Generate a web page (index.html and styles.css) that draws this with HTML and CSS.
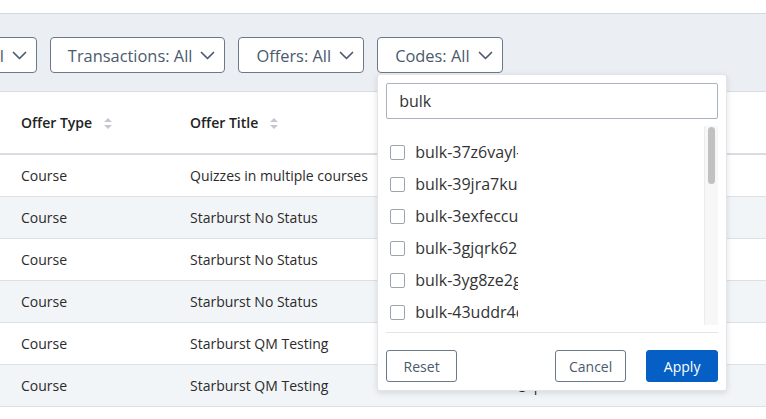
FILE: index.html
```html
<!DOCTYPE html>
<html lang="en">
<head>
  <meta charset="UTF-8">
  <title>Transactions</title>
  <link rel="stylesheet" href="styles.css">
</head>
<body>

  <div class="top-strip"></div>

  <div class="filtros">
    <div class="filtro">Status: All <svg class="chev" viewBox="0 0 15 9"><polyline points="1.5,1.5 7.5,7.5 13.5,1.5"/></svg></div>
    <div class="filtro">Transactions: All <svg class="chev" viewBox="0 0 15 9"><polyline points="1.5,1.5 7.5,7.5 13.5,1.5"/></svg></div>
    <div class="filtro">Offers: All <svg class="chev" viewBox="0 0 15 9"><polyline points="1.5,1.5 7.5,7.5 13.5,1.5"/></svg></div>
    <div class="filtro-wrap">
      <div class="filtro">Codes: All <svg class="chev" viewBox="0 0 15 9"><polyline points="1.5,1.5 7.5,7.5 13.5,1.5"/></svg></div>

      <div class="popover">
        <input class="buscar" type="text" value="bulk">
        <div class="lista">
          <div class="items">
            <label class="opcion"><span class="check"></span><span class="codigo">bulk-37z6vayl-k2m9</span></label>
            <label class="opcion"><span class="check"></span><span class="codigo">bulk-39jra7ku-p4x1</span></label>
            <label class="opcion"><span class="check"></span><span class="codigo">bulk-3exfeccu-a8d2</span></label>
            <label class="opcion"><span class="check"></span><span class="codigo">bulk-3gjqrk62-z7q3</span></label>
            <label class="opcion"><span class="check"></span><span class="codigo">bulk-3yg8ze2g-m1c5</span></label>
            <label class="opcion"><span class="check"></span><span class="codigo">bulk-43uddr4c-t9w6</span></label>
            <label class="opcion"><span class="check"></span><span class="codigo">bulk-4b7hnq2z-r3e8</span></label>
            <label class="opcion"><span class="check"></span><span class="codigo">bulk-4kd92mfa-u5y0</span></label>
          </div>
          <div class="barra"><div class="thumb"></div></div>
        </div>
        <div class="acciones">
          <button class="btn">Reset</button>
          <div class="derecha">
            <button class="btn">Cancel</button>
            <button class="btn btn-azul">Apply</button>
          </div>
        </div>
      </div>
    </div>
  </div>

  <table class="tabla">
    <thead>
      <tr>
        <th class="c1">Offer Type <span class="orden"></span></th>
        <th class="c2">Offer Title <span class="orden"></span></th>
        <th>Participant</th>
      </tr>
    </thead>
    <tbody>
      <tr><td class="c1">Course</td><td class="c2">Quizzes in multiple courses</td><td>anna@questionmark.com</td></tr>
      <tr><td class="c1">Course</td><td class="c2">Starburst No Status</td><td>mark@questionmark.com</td></tr>
      <tr><td class="c1">Course</td><td class="c2">Starburst No Status</td><td>mark@questionmark.com</td></tr>
      <tr><td class="c1">Course</td><td class="c2">Starburst No Status</td><td>mark@questionmark.com</td></tr>
      <tr><td class="c1">Course</td><td class="c2">Starburst QM Testing</td><td>christian@questionmark.com</td></tr>
      <tr><td class="c1">Course</td><td class="c2">Starburst QM Testing</td><td>christian@questionmark.com</td></tr>
    </tbody>
  </table>

</body>
</html>
```

FILE: styles.css
```css
* { box-sizing: border-box; }

body {
  margin: 0;
  font-family: 'Open Sans', 'Noto Sans', sans-serif;
  background: #fff;
  color: #2b2b2b;
  overflow: hidden;
}

.top-strip {
  height: 14px;
  background: #fff;
  border-bottom: 1px solid #d3d7dc;
}

.filtros {
  display: flex;
  gap: 13px;
  padding: 23px 0 18px 0;
  margin-left: -89px;
  background: #ebeff4;
  border-bottom: 1px solid #d8dce1;
}

.filtro {
  display: flex;
  align-items: center;
  gap: 8px;
  height: 36px;
  padding: 0 9px 0 17px;
  background: #fff;
  border: 1px solid #6b7889;
  border-radius: 4px;
  color: #4b5a6d;
  font-size: 16.4px;
  white-space: nowrap;
}

.chev {
  width: 15px;
  height: 9px;
  fill: none;
  stroke: #4b5a6d;
  stroke-width: 1.7;
  stroke-linecap: round;
  stroke-linejoin: round;
}

.filtro-wrap {
  position: relative;
}

.popover {
  position: absolute;
  top: 37px;
  left: 0;
  z-index: 5;
  width: 350px;
  padding: 8px;
  background: #fff;
  border: 1px solid #e1e4e8;
  border-radius: 3px;
  box-shadow: 0 2px 6px rgba(0,0,0,0.12);
}

.buscar {
  display: block;
  width: 100%;
  height: 36px;
  padding: 0 12px;
  font-family: inherit;
  font-size: 16px;
  color: #333;
  border: 1px solid #a9b2bd;
  border-radius: 2px;
  outline: none;
}

.lista {
  display: flex;
  height: 199px;
  margin-top: 7px;
}

.items {
  flex: 1;
  overflow: hidden;
  padding-top: 10px;
}

.barra {
  width: 14px;
  background: #f7f7f7;
  border-left: 1px solid #ececec;
  padding: 1px 0 0 3px;
}

.thumb {
  width: 7px;
  height: 57px;
  background: #c1c1c1;
  border-radius: 4px;
}

.opcion {
  display: flex;
  align-items: center;
  gap: 10px;
  height: 32px;
  padding-left: 4px;
  font-size: 16px;
  color: #333;
}

.check {
  width: 15px;
  height: 15px;
  border: 1px solid #9ba4af;
  border-radius: 2px;
  flex-shrink: 0;
}

.codigo {
  width: 103px;
  overflow: hidden;
  white-space: nowrap;
}

.acciones {
  display: flex;
  justify-content: space-between;
  margin-top: 7px;
  padding-top: 17px;
  border-top: 1px solid #e0e4e9;
}

.derecha {
  display: flex;
  gap: 20px;
}

.btn {
  width: 71px;
  height: 32px;
  font-family: inherit;
  font-size: 14px;
  color: #4b5a6d;
  background: #fff;
  border: 1px solid #6b7889;
  border-radius: 3px;
}

.btn-azul {
  width: 72px;
  background: #065fc4;
  border-color: #065fc4;
  color: #fff;
}

.tabla {
  width: 100%;
  border-collapse: collapse;
  font-size: 14px;
}

.tabla th {
  height: 62px;
  text-align: left;
  font-weight: 600;
  color: #222;
  border-bottom: 2px solid #d9dde2;
  padding: 0;
}

.tabla td {
  height: 42px;
  padding: 0;
  border-bottom: 1px solid #dde1e6;
  color: #2b2b2b;
}

.tabla tbody tr:nth-child(even) td {
  background: #f2f5f8;
}

.c1 { width: 190px; padding-left: 21px !important; }
.c2 { width: 270px; }

.orden {
  display: inline-block;
  vertical-align: middle;
  margin-left: 8px;
  width: 9px;
  height: 11px;
  position: relative;
  top: -1px;
}

.orden::before, .orden::after {
  content: "";
  position: absolute;
  left: 0;
  border-left: 4.5px solid transparent;
  border-right: 4.5px solid transparent;
}

.orden::before {
  top: 0;
  border-bottom: 4.5px solid #c3c8ce;
}

.orden::after {
  bottom: 0;
  border-top: 4.5px solid #c3c8ce;
}
```
